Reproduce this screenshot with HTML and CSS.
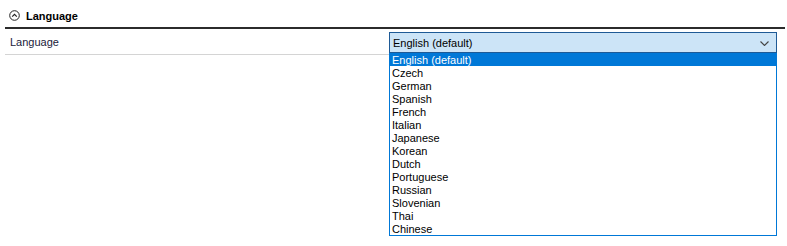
FILE: index.html
```html
<!DOCTYPE html>
<html>
<head>
<meta charset="utf-8">
<link rel="stylesheet" href="styles.css">
</head>
<body>
<div class="section">
  <div class="section-header">
    <svg class="collapse-icon" width="11" height="11" viewBox="0 0 11 11">
      <circle cx="5.5" cy="5.5" r="4.8" fill="none" stroke="#222" stroke-width="1"/>
      <path d="M3.2 6.6 L5.5 4.3 L7.8 6.6" fill="none" stroke="#222" stroke-width="1.2"/>
    </svg>
    <span class="section-title">Language</span>
  </div>
  <div class="row">
    <div class="row-label">Language</div>
    <div class="combo">
      <div class="combo-box">
        <span class="combo-value">English (default)</span>
        <svg class="combo-arrow" width="9" height="5" viewBox="0 0 9 5">
          <path d="M0.5 0.5 L4.5 4.5 L8.5 0.5" fill="none" stroke="#444" stroke-width="1.1"/>
        </svg>
      </div>
      <ul class="dropdown">
        <li class="selected">English (default)</li>
        <li>Czech</li>
        <li>German</li>
        <li>Spanish</li>
        <li>French</li>
        <li>Italian</li>
        <li>Japanese</li>
        <li>Korean</li>
        <li>Dutch</li>
        <li>Portuguese</li>
        <li>Russian</li>
        <li>Slovenian</li>
        <li>Thai</li>
        <li>Chinese</li>
      </ul>
    </div>
  </div>
</div>
</body>
</html>
```
FILE: styles.css
```css
html, body {
  margin: 0;
  padding: 0;
  background: #ffffff;
}
body {
  font-family: "Liberation Sans", Arial, sans-serif;
  font-size: 11px;
  color: #000;
}
.section {
  margin: 0 2px 0 5px;
}
.section-header {
  box-sizing: border-box;
  height: 29px;
  border-bottom: 2px solid #2b2b2b;
  display: flex;
  align-items: center;
  padding-left: 4px;
  padding-top: 4px;
}
.collapse-icon {
  display: block;
  margin-right: 6px;
}
.section-title {
  font-weight: bold;
  font-size: 11px;
}
.row {
  display: flex;
  align-items: flex-start;
}
.row-label {
  width: 384px;
  height: 26px;
  padding-left: 5px;
  padding-top: 1px;
  box-sizing: border-box;
  line-height: 25px;
  color: #1a1a3a;
  border-bottom: 1px solid #d4d4d4;
}
.combo {
  width: 388px;
  margin-top: 3px;
}
.combo-box {
  height: 21px;
  box-sizing: border-box;
  border: 1px solid #1e5a96;
  background: #cce4f7;
  display: flex;
  align-items: center;
  justify-content: space-between;
  padding: 1px 7px 0 3px;
}
.combo-arrow {
  display: block;
}
.dropdown {
  box-sizing: border-box;
  margin: 0;
  padding: 0;
  list-style: none;
  background: #fff;
  border: 1px solid #0078d7;
  border-top: none;
}
.dropdown li {
  height: 13px;
  box-sizing: border-box;
  padding-top: 1px;
  line-height: 13px;
  padding-left: 2px;
}
.dropdown li.selected {
  background: #0078d7;
  color: #fff;
}
```
